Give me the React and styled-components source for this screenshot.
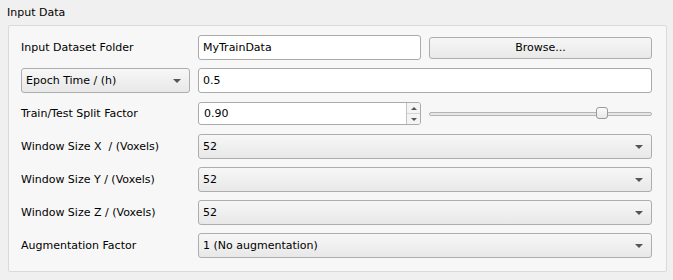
import React from 'react';
import styled, { createGlobalStyle } from 'styled-components';

const GlobalStyle = createGlobalStyle`
  html, body {
    margin: 0;
    padding: 0;
    background: #f0f0f0;
  }
  body {
    font-family: Tahoma, "DejaVu Sans", "Liberation Sans", sans-serif;
    font-size: 11px;
    color: #000;
  }
`;

const Page = styled.div`
  width: 673px;
  height: 280px;
  padding: 5px 6px 0 8px;
  box-sizing: border-box;
`;

const GroupTitle = styled.div`
  height: 20px;
  line-height: 16px;
  margin-left: -1px;
`;

const GroupBox = styled.div`
  border: 1px solid #dadada;
  border-radius: 2px;
  background: #f7f7f7;
  padding: 9px 14px 13px 12px;
  display: grid;
  grid-template-columns: 169px 1fr;
  column-gap: 8px;
  row-gap: 8px;
  align-items: center;
`;

const Label = styled.div`
  white-space: pre;
  line-height: 25px;
`;

const Pair = styled.div`
  display: grid;
  grid-template-columns: 1fr 1fr;
  column-gap: 8px;
  align-items: center;
`;

const LineEdit = styled.div`
  height: ${(p) => p.h || 25}px;
  box-sizing: border-box;
  border: 1px solid #ababab;
  border-radius: 3px;
  background: #fff;
  padding: 0 4px;
  line-height: ${(p) => (p.h || 25) - 2}px;
  white-space: pre;
`;

const Button = styled.div`
  height: 22px;
  box-sizing: border-box;
  border: 1px solid #adadad;
  border-radius: 3px;
  background: linear-gradient(#f6f6f6, #e9e9e9);
  text-align: center;
  line-height: 20px;
`;

const Combo = styled.div`
  height: 25px;
  box-sizing: border-box;
  border: 1px solid #adadad;
  border-radius: 3px;
  background: linear-gradient(#f7f7f7, #e8e8e8);
  display: flex;
  align-items: center;
  padding: ${(p) => (p.label ? '0 8px 0 4px' : '0 8px 0 4px')};
`;

const ComboText = styled.span`
  flex: 1;
  white-space: pre;
`;

const Arrow = styled.span`
  width: 0;
  height: 0;
  border-left: 4px solid transparent;
  border-right: 4px solid transparent;
  border-top: 4px solid #555;
`;

const Spin = styled.div`
  height: 23px;
  box-sizing: border-box;
  border: 1px solid #ababab;
  border-radius: 3px;
  background: #fff;
  display: flex;
  overflow: hidden;
`;

const SpinText = styled.div`
  flex: 1;
  padding: 0 5px;
  line-height: 21px;
`;

const SpinButtons = styled.div`
  width: 13px;
  border-left: 1px solid #c4c4c4;
  display: flex;
  flex-direction: column;
  background: #f4f4f4;
`;

const SpinBtn = styled.div`
  flex: 1;
  display: flex;
  align-items: center;
  justify-content: center;
  & + & {
    border-top: 1px solid #d4d4d4;
  }
`;

const SmallTri = styled.span`
  width: 0;
  height: 0;
  border-left: 3px solid transparent;
  border-right: 3px solid transparent;
  ${(p) => (p.up ? 'border-bottom: 3px solid #555;' : 'border-top: 3px solid #555;')}
`;

const Slider = styled.div`
  position: relative;
  height: 23px;
  display: flex;
  align-items: center;
`;

const Groove = styled.div`
  width: 100%;
  height: 4px;
  box-sizing: border-box;
  border: 1px solid #b4b4b4;
  border-radius: 2px;
  background: #e6e6e6;
`;

const Handle = styled.div`
  position: absolute;
  top: 5px;
  width: 12px;
  height: 12px;
  box-sizing: border-box;
  border: 1px solid #9a9a9a;
  border-radius: 3px;
  background: linear-gradient(#fbfbfb, #e9e9e9);
`;

const ComboField = ({ children }) => (
  <Combo>
    <ComboText>{children}</ComboText>
    <Arrow />
  </Combo>
);

const App = () => (
  <Page>
    <GlobalStyle />
    <GroupTitle>Input Data</GroupTitle>
    <GroupBox>
      <Label>Input Dataset Folder</Label>
      <Pair>
        <LineEdit>MyTrainData</LineEdit>
        <Button>Browse...</Button>
      </Pair>

      <ComboField>Epoch Time / (h)</ComboField>
      <LineEdit>0.5</LineEdit>

      <Label>Train/Test Split Factor</Label>
      <Pair>
        <Spin>
          <SpinText>0.90</SpinText>
          <SpinButtons>
            <SpinBtn><SmallTri up /></SpinBtn>
            <SpinBtn><SmallTri /></SpinBtn>
          </SpinButtons>
        </Spin>
        <Slider>
          <Groove />
          <Handle style={{ left: `${0.9 * (223 - 12) - 23}px` }} />
        </Slider>
      </Pair>

      <Label>Window Size X  / (Voxels)</Label>
      <ComboField>52</ComboField>

      <Label>Window Size Y / (Voxels)</Label>
      <ComboField>52</ComboField>

      <Label>Window Size Z / (Voxels)</Label>
      <ComboField>52</ComboField>

      <Label>Augmentation Factor</Label>
      <ComboField>1 (No augmentation)</ComboField>
    </GroupBox>
  </Page>
);

export default App;
